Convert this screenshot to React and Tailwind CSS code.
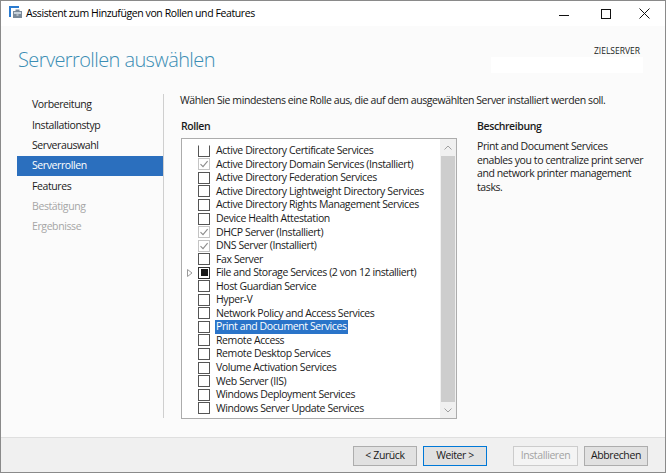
import React from "react";

const rows = [
  { t: "Active Directory Certificate Services", s: "off", clip: true },
  { t: "Active Directory Domain Services (Installiert)", s: "checked" },
  { t: "Active Directory Federation Services", s: "off" },
  { t: "Active Directory Lightweight Directory Services", s: "off" },
  { t: "Active Directory Rights Management Services", s: "off" },
  { t: "Device Health Attestation", s: "off" },
  { t: "DHCP Server (Installiert)", s: "checked" },
  { t: "DNS Server (Installiert)", s: "checked" },
  { t: "Fax Server", s: "off" },
  { t: "File and Storage Services (2 von 12 installiert)", s: "partial", exp: true },
  { t: "Host Guardian Service", s: "off" },
  { t: "Hyper-V", s: "off" },
  { t: "Network Policy and Access Services", s: "off" },
  { t: "Print and Document Services", s: "off", sel: true },
  { t: "Remote Access", s: "off" },
  { t: "Remote Desktop Services", s: "off" },
  { t: "Volume Activation Services", s: "off" },
  { t: "Web Server (IIS)", s: "off" },
  { t: "Windows Deployment Services", s: "off" },
  { t: "Windows Server Update Services", s: "off" },
];

const nav = [
  { t: "Vorbereitung" },
  { t: "Installationstyp" },
  { t: "Serverauswahl" },
  { t: "Serverrollen", active: true },
  { t: "Features" },
  { t: "Bestätigung", disabled: true },
  { t: "Ergebnisse", disabled: true },
];

const desc = [
  "Print and Document Services",
  "enables you to centralize print server",
  "and network printer management",
  "tasks.",
];

function Box({ s, clip }) {
  if (s === "checked") {
    return (
      <div className="w-[12px] h-[12px] border border-[#c4c4c4] bg-white flex items-center justify-center">
        <svg width="10" height="10" viewBox="0 0 10 10">
          <path d="M1.5 5.2 L4 7.6 L8.6 2.2" fill="none" stroke="#8c8c8c" strokeWidth="1.1" />
        </svg>
      </div>
    );
  }
  if (s === "partial") {
    return (
      <div className="w-[12px] h-[12px] border border-[#333333] bg-white flex items-center justify-center">
        <div className="w-[7px] h-[7px] bg-[#1a1a1a]" />
      </div>
    );
  }
  return (
    <div
      className={
        "w-[12px] h-[12px] border border-[#555555] bg-white " +
        (clip ? "border-t-transparent" : "")
      }
    />
  );
}

const T = "text-[10.5px] tracking-[-0.4px]";

export default function App() {
  return (
    <div className="w-[666px] h-[476px] bg-white overflow-hidden font-['Open_Sans','Noto_Sans',sans-serif] text-[#000]">
      <div className="w-[666px] h-[473px] border border-[#8a8a8a] flex flex-col bg-[#fbfbfb]">
        {/* Title bar */}
        <div className="h-[25px] bg-white flex items-center shrink-0">
          <div className="w-[8px]" />
          <svg width="14" height="14" viewBox="0 0 14 14" className="mt-[-2px]">
            <rect x="0" y="0" width="10" height="2" fill="#2b7bd0" />
            <rect x="0" y="0" width="2" height="11" fill="#2b7bd0" />
            <rect x="4" y="5" width="9" height="7" fill="#7b8a99" />
            <rect x="5" y="6" width="7" height="2" fill="#c9d3dc" />
            <rect x="6.5" y="3.5" width="4" height="1.5" fill="#7b8a99" />
            <rect x="7.5" y="8.5" width="2" height="1" fill="#e8eef3" />
          </svg>
          <span className={"ml-[3px] leading-[14px] mt-[-1px] text-[#000] " + T}>
            Assistent zum Hinzufügen von Rollen und Features
          </span>
          <div className="flex-1" />
          <div className="w-[46px] h-[25px] flex items-center justify-center">
            <svg width="10" height="10" viewBox="0 0 10 10">
              <path d="M0 6.5 H10" stroke="#111" strokeWidth="1" />
            </svg>
          </div>
          <div className="w-[38px] h-[25px] flex items-center justify-center">
            <svg width="10" height="10" viewBox="0 0 10 10">
              <rect x="0.5" y="0.5" width="9" height="9" fill="none" stroke="#111" strokeWidth="1" />
            </svg>
          </div>
          <div className="w-[38px] h-[25px] flex items-center justify-center mr-[2px]">
            <svg width="11" height="11" viewBox="0 0 11 11">
              <path d="M0.5 0.5 L10.5 10.5 M10.5 0.5 L0.5 10.5" stroke="#111" strokeWidth="1" />
            </svg>
          </div>
        </div>

        {/* Header */}
        <div className="h-[62px] flex shrink-0">
          <div className="pl-[17px] pt-[21px]">
            <div className="text-[20px] leading-[26px] font-light tracking-[-0.6px] text-[#3a8db4]">
              Serverrollen auswählen
            </div>
          </div>
          <div className="flex-1" />
          <div className="flex flex-col items-end pr-[22px] pt-[19px]">
            <div className="text-[8.5px] leading-[12px] text-[#222] pr-[3px]">ZIELSERVER</div>
            <div className="w-[152px] h-[16px] bg-white" />
          </div>
        </div>

        {/* Main */}
        <div className="h-[349px] flex shrink-0">
          <div className="w-[162px] pt-[7px] pl-[16px] shrink-0">
            {nav.map((n) => (
              <div
                key={n.t}
                className={
                  "h-[20.33px] flex items-center pl-[15px] " +
                  T +
                  " " +
                  (n.active
                    ? "bg-[#2b6fbe] text-white"
                    : n.disabled
                    ? "text-[#a6a6a6]"
                    : "text-[#1a1a1a]")
                }
              >
                {n.t}
              </div>
            ))}
          </div>
          <div className="w-px h-[324px] mt-[6px] bg-[#cfcfcf] shrink-0" />
          <div className="pl-[16px] pt-[5px] flex-1">
            <div className={"h-[14px] leading-[14px] text-[#1a1a1a] whitespace-nowrap " + T}>
              Wählen Sie mindestens eine Rolle aus, die auf dem ausgewählten Server installiert werden soll.
            </div>
            <div className="flex mt-[12px]">
              <div className="w-[277px] shrink-0">
                <div className={"h-[14px] leading-[14px] font-semibold text-[#1a1a1a] pl-[1px] " + T}>
                  Rollen
                </div>
                <div className="mt-[5px] h-[281px] ml-[1px] border border-[#acacac] bg-white flex">
                  <div className="flex-1 pt-[5px] overflow-hidden">
                    {rows.map((r) => (
                      <div key={r.t} className="h-[13.55px] flex items-center">
                        <div className="w-[16px] flex justify-center shrink-0">
                          {r.exp && (
                            <svg width="6" height="8" viewBox="0 0 6 8">
                              <path d="M0.5 0.5 L5 4 L0.5 7.5 Z" fill="none" stroke="#9a9a9a" strokeWidth="1" />
                            </svg>
                          )}
                        </div>
                        <div className="shrink-0">
                          <Box s={r.s} clip={r.clip} />
                        </div>
                        <div
                          className={
                            "ml-[5px] px-[1px] h-[13.5px] flex items-center leading-[13px] whitespace-nowrap " +
                            T +
                            " " +
                            (r.sel ? "bg-[#2a74c9] text-white" : "text-[#1a1a1a]")
                          }
                        >
                          {r.t}
                        </div>
                      </div>
                    ))}
                  </div>
                  <div className="w-[16px] bg-[#f0f0f0] flex flex-col shrink-0">
                    <div className="h-[17px] flex items-center justify-center">
                      <svg width="8" height="5" viewBox="0 0 8 5">
                        <path d="M0.5 4.5 L4 1 L7.5 4.5" fill="none" stroke="#a0a0a0" strokeWidth="1" />
                      </svg>
                    </div>
                    <div className="flex-1 bg-[#cdcdcd] mx-[1px]" />
                    <div className="h-[16px] flex items-center justify-center">
                      <svg width="8" height="5" viewBox="0 0 8 5">
                        <path d="M0.5 0.5 L4 4 L7.5 0.5" fill="none" stroke="#a0a0a0" strokeWidth="1" />
                      </svg>
                    </div>
                  </div>
                </div>
              </div>
              <div className="pl-[20px] w-[190px]">
                <div className={"h-[14px] leading-[14px] font-semibold text-[#1a1a1a] " + T}>
                  Beschreibung
                </div>
                <div className="mt-[7px]">
                  {desc.map((l) => (
                    <div key={l} className={"h-[13.7px] leading-[13.7px] whitespace-nowrap text-[#1a1a1a] " + T}>
                      {l}
                    </div>
                  ))}
                </div>
              </div>
            </div>
          </div>
        </div>

        {/* Footer */}
        <div className="flex-1 bg-[#f0f0f0] border-t border-[#dfdfdf] flex items-start pt-[8px] pr-[17px] justify-end">
          <div className={"w-[64px] h-[20px] border border-[#adadad] bg-[#e1e1e1] flex items-center justify-center text-[#1a1a1a] " + T}>
            &lt; Zurück
          </div>
          <div className={"ml-[6px] w-[64px] h-[20px] border border-[#0078d7] bg-[#e1e1e1] flex items-center justify-center text-[#1a1a1a] " + T}>
            Weiter &gt;
          </div>
          <div className={"ml-[26px] w-[65px] h-[20px] border border-[#cccccc] bg-[#f4f4f4] flex items-center justify-center text-[#a3a3a3] " + T}>
            Installieren
          </div>
          <div className={"ml-[6px] w-[64px] h-[20px] border border-[#adadad] bg-[#e1e1e1] flex items-center justify-center text-[#1a1a1a] " + T}>
            Abbrechen
          </div>
        </div>
      </div>
    </div>
  );
}
